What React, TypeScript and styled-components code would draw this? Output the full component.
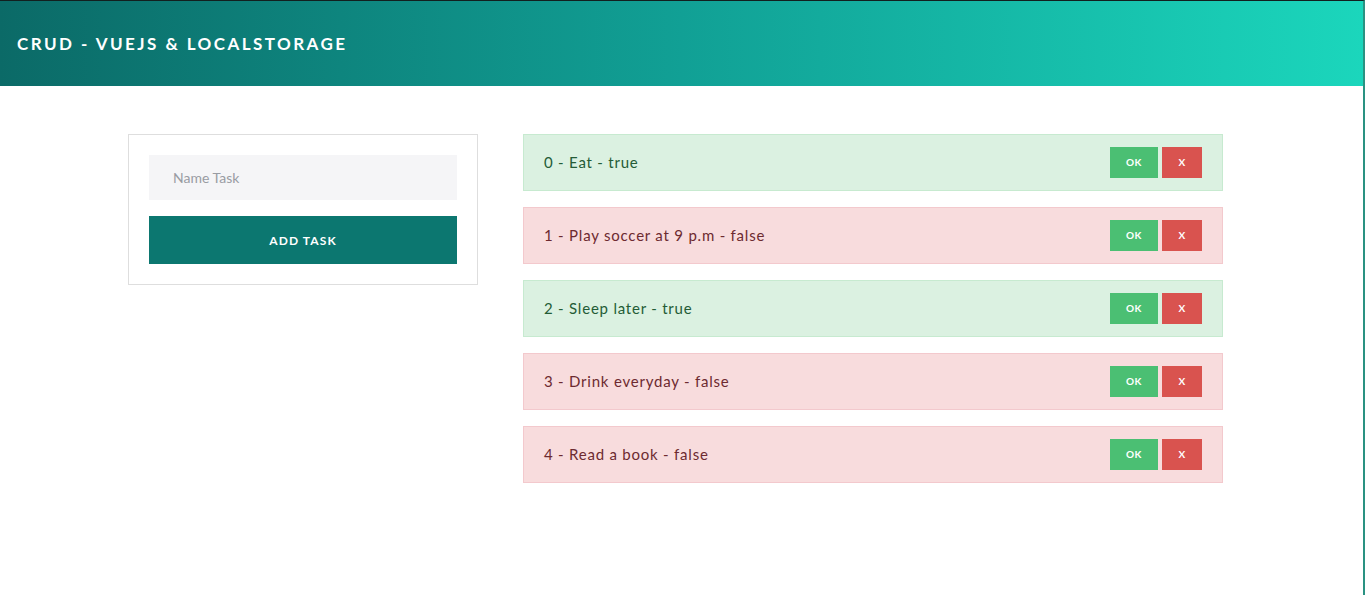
import React from "react";
import styled, { createGlobalStyle } from "styled-components";

const Global = createGlobalStyle`
  html, body { margin: 0; padding: 0; background: #fff; }
  body { font-family: Lato, "Open Sans", sans-serif; }
  * { box-sizing: border-box; }
`;

const Page = styled.div`
  min-height: 595px;
  border-top: 1px solid #12201f;
  border-right: 2px solid #2a9282;
`;

const Header = styled.header`
  height: 85px;
  display: flex;
  align-items: center;
  padding-left: 17px;
  background: linear-gradient(90deg, #0b6a67 0%, #11a095 50%, #1bd6bc 100%);
`;

const Title = styled.h1`
  margin: 0;
  color: #fff;
  font-family: Lato, sans-serif;
  font-size: 17px;
  font-weight: 700;
  letter-spacing: 2.45px;
  text-transform: uppercase;
`;

const Main = styled.main`
  display: flex;
  align-items: flex-start;
  gap: 45px;
  padding: 48px 0 0 128px;
`;

const FormCard = styled.div`
  width: 350px;
  border: 1px solid #dedede;
  padding: 20px 20px 20px;
  display: flex;
  flex-direction: column;
  gap: 16px;
`;

const Input = styled.input`
  height: 45px;
  border: none;
  outline: none;
  background: #f5f5f7;
  padding: 0 24px;
  font-family: Lato, sans-serif;
  font-size: 14px;
  color: #333;
  &::placeholder { color: #999ca3; }
`;

const AddButton = styled.button`
  height: 48px;
  border: none;
  background: #0c7770;
  color: #fff;
  font-family: Lato, sans-serif;
  font-size: 12px;
  font-weight: 700;
  letter-spacing: 1.1px;
  text-transform: uppercase;
`;

const List = styled.div`
  width: 700px;
  display: flex;
  flex-direction: column;
  gap: 16px;
`;

const Row = styled.div<{ $done: boolean }>`
  height: 57px;
  display: flex;
  align-items: center;
  justify-content: space-between;
  padding: 0 20px 1px 20px;
  background: ${p => (p.$done ? "#dbf1e1" : "#f8dcdd")};
  border: 1px solid ${p => (p.$done ? "#c7ead0" : "#f3c9cd")};
  color: ${p => (p.$done ? "#245c36" : "#6d2a30")};
  font-family: Lato, sans-serif;
  font-size: 15px;
  letter-spacing: 0.78px;
`;

const Actions = styled.div`
  display: flex;
  gap: 4px;
`;

const SmallButton = styled.button<{ $kind: "ok" | "x" }>`
  height: 31px;
  width: ${p => (p.$kind === "ok" ? "48px" : "40px")};
  border: none;
  padding: 0;
  background: ${p => (p.$kind === "ok" ? "#4bbf73" : "#d9534f")};
  color: #fff;
  font-family: Lato, sans-serif;
  font-size: 10px;
  font-weight: 700;
  letter-spacing: 0.5px;
`;

const tasks = [
  { name: "Eat", done: true },
  { name: "Play soccer at 9 p.m", done: false },
  { name: "Sleep later", done: true },
  { name: "Drink everyday", done: false },
  { name: "Read a book", done: false },
];

export default function App() {
  return (
    <>
      <Global />
      <Page>
        <Header>
          <Title>CRUD - VueJS &amp; LocalStorage</Title>
        </Header>
        <Main>
          <FormCard>
            <Input placeholder="Name Task" />
            <AddButton>Add Task</AddButton>
          </FormCard>
          <List>
            {tasks.map((t, i) => (
              <Row key={i} $done={t.done}>
                <span>{`${i} - ${t.name} - ${t.done}`}</span>
                <Actions>
                  <SmallButton $kind="ok">OK</SmallButton>
                  <SmallButton $kind="x">X</SmallButton>
                </Actions>
              </Row>
            ))}
          </List>
        </Main>
      </Page>
    </>
  );
}
